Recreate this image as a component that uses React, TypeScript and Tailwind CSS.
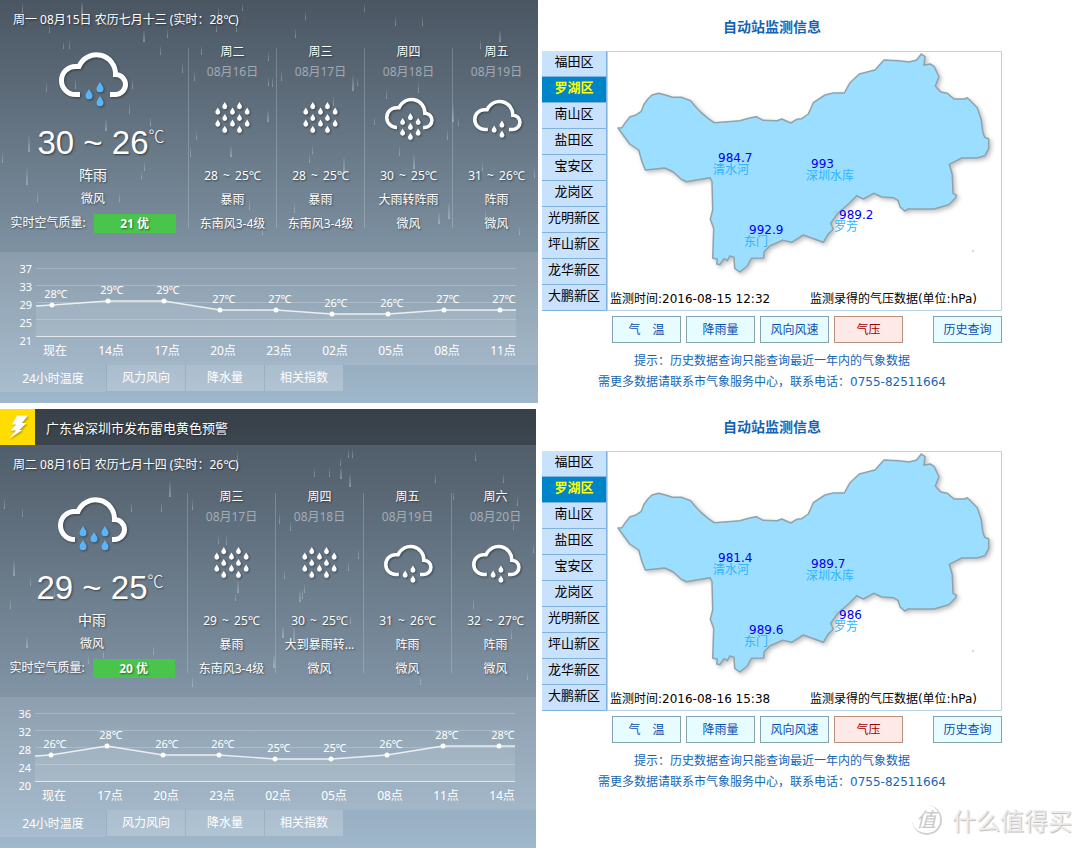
import clsx from 'clsx';

type IconKind = 'shower' | 'moderate' | 'heavy' | 'storm';

interface Forecast {
  week: string;
  date: string;
  icon: IconKind;
  low: number;
  high: number;
  condition: string;
  wind: string;
}

interface HourPoint {
  hour: string;
  temp: number;
  y: number;
}

interface WeatherData {
  alert?: string;
  title: string;
  icon: IconKind;
  high: number;
  low: number;
  condition: string;
  wind: string;
  aqi: string;
  forecasts: Forecast[];
  scale: number[];
  hours: HourPoint[];
  rain: number[][];
}

interface StationData {
  time: string;
  values: string[];
}

const WEATHER: WeatherData[] = [
  {
    title: '周一 08月15日 农历七月十三 (实时：28℃)',
    icon: 'shower',
    high: 30,
    low: 26,
    condition: '阵雨',
    wind: '微风',
    aqi: '21 优',
    forecasts: [
      { week: '周二', date: '08月16日', icon: 'storm', high: 28, low: 25, condition: '暴雨', wind: '东南风3-4级' },
      { week: '周三', date: '08月17日', icon: 'storm', high: 28, low: 25, condition: '暴雨', wind: '东南风3-4级' },
      { week: '周四', date: '08月18日', icon: 'heavy', high: 30, low: 25, condition: '大雨转阵雨', wind: '微风' },
      { week: '周五', date: '08月19日', icon: 'shower', high: 31, low: 26, condition: '阵雨', wind: '微风' },
    ],
    scale: [37, 33, 29, 25, 21],
    hours: [
      { hour: '现在', temp: 28, y: 54 },
      { hour: '14点', temp: 29, y: 50 },
      { hour: '17点', temp: 29, y: 50 },
      { hour: '20点', temp: 27, y: 59 },
      { hour: '23点', temp: 27, y: 59 },
      { hour: '02点', temp: 26, y: 63 },
      { hour: '05点', temp: 26, y: 63 },
      { hour: '08点', temp: 27, y: 59 },
      { hour: '11点', temp: 27, y: 59 },
    ],
    rain: [
      [22, 3, 10], [81, 2, 12], [49, 25, 8], [143, 31, 11], [167, 29, 9], [63, 42, 7], [69, 40, 9], [160, 46, 9],
      [201, 46, 9], [182, 64, 9], [46, 83, 9], [75, 79, 10], [132, 80, 9], [28, 136, 16], [129, 104, 10],
      [105, 120, 11], [150, 117, 9], [26, 169, 16], [2, 153, 10], [144, 162, 9], [141, 172, 7], [37, 192, 10],
      [119, 194, 8], [196, 132, 8], [190, 147, 10], [230, 146, 11], [218, 7, 8], [242, 4, 7], [216, 24, 8],
      [236, 24, 8], [305, 12, 8], [295, 29, 9], [268, 52, 9], [268, 77, 9], [272, 78, 9], [281, 71, 10],
      [333, 96, 10], [267, 111, 11], [312, 146, 8], [309, 154, 9], [343, 158, 16], [294, 203, 10], [249, 200, 10],
      [262, 230, 5], [194, 72, 9], [364, 4, 8], [395, 17, 9], [422, 17, 9], [499, 31, 11], [480, 40, 9],
      [352, 76, 15], [357, 78, 8], [418, 83, 10], [386, 90, 9], [452, 106, 16], [458, 118, 8], [374, 117, 8],
      [447, 130, 10], [399, 146, 10], [413, 155, 14], [482, 162, 9], [534, 168, 10], [448, 203, 16],
      [438, 213, 11], [485, 210, 10], [519, 227, 8],
    ],
  },
  {
    alert: '广东省深圳市发布雷电黄色预警',
    title: '周二 08月16日 农历七月十四 (实时：26℃)',
    icon: 'moderate',
    high: 29,
    low: 25,
    condition: '中雨',
    wind: '微风',
    aqi: '20 优',
    forecasts: [
      { week: '周三', date: '08月17日', icon: 'storm', high: 29, low: 25, condition: '暴雨', wind: '东南风3-4级' },
      { week: '周四', date: '08月18日', icon: 'storm', high: 30, low: 25, condition: '大到暴雨转...', wind: '微风' },
      { week: '周五', date: '08月19日', icon: 'shower', high: 31, low: 26, condition: '阵雨', wind: '微风' },
      { week: '周六', date: '08月20日', icon: 'shower', high: 32, low: 27, condition: '阵雨', wind: '微风' },
    ],
    scale: [36, 32, 28, 24, 20],
    hours: [
      { hour: '现在', temp: 26, y: 59 },
      { hour: '17点', temp: 28, y: 50 },
      { hour: '20点', temp: 26, y: 59 },
      { hour: '23点', temp: 26, y: 59 },
      { hour: '02点', temp: 25, y: 63 },
      { hour: '05点', temp: 25, y: 63 },
      { hour: '08点', temp: 26, y: 59 },
      { hour: '11点', temp: 28, y: 50 },
      { hour: '14点', temp: 28, y: 50 },
    ],
    rain: [
      [169, 73, 15], [4, 90, 10], [22, 99, 9], [131, 94, 9], [161, 94, 9], [192, 91, 10], [80, 44, 10],
      [237, 43, 8], [13, 152, 15], [30, 168, 9], [10, 190, 10], [26, 228, 11], [54, 180, 8], [153, 237, 9],
      [103, 240, 9], [88, 247, 8], [192, 268, 10], [237, 172, 12], [235, 185, 7], [218, 127, 8], [226, 126, 10],
      [348, 40, 9], [352, 40, 9], [340, 49, 8], [314, 59, 9], [329, 59, 9], [340, 59, 11], [349, 66, 12],
      [435, 65, 9], [503, 65, 9], [475, 43, 9], [453, 83, 8], [279, 105, 10], [290, 113, 9], [358, 140, 10],
      [348, 153, 9], [284, 161, 9], [304, 175, 9], [299, 182, 11], [302, 180, 10], [282, 218, 11], [273, 247, 12],
      [293, 218, 16], [473, 190, 10], [350, 206, 9], [511, 220, 10], [527, 264, 7], [420, 268, 8], [513, 112, 9],
      [533, 136, 8], [517, 88, 9],
    ],
  },
];

const STATIONS: StationData[] = [
  { time: '2016-08-15 12:32', values: ['984.7', '993', '989.2', '992.9'] },
  { time: '2016-08-16 15:38', values: ['981.4', '989.7', '986', '989.6'] },
];

const PINS = [
  { name: '清水河', x: 105, y: 110 },
  { name: '深圳水库', x: 198, y: 116 },
  { name: '罗芳', x: 226, y: 167 },
  { name: '东门', x: 136, y: 182 },
];

const DISTRICTS = ['福田区', '罗湖区', '南山区', '盐田区', '宝安区', '龙岗区', '光明新区', '坪山新区', '龙华新区', '大鹏新区'];
const TABS = ['24小时温度', '风力风向', '降水量', '相关指数'];
const METRICS = ['气　温', '降雨量', '风向风速', '气压'];

const DROPS: Record<IconKind, number[][]> = {
  shower: [[41, 32], [30, 39], [41, 46]],
  moderate: [[25, 31], [47, 31], [36, 37], [25, 45], [47, 45]],
  heavy: [[36, 24], [25, 31], [47, 31], [36, 38], [25, 46], [47, 46], [36, 52]],
  storm: [[14, 0], [35, 0], [4, 8], [25, 8], [46, 8], [14, 17], [35, 17], [4, 25], [25, 25], [46, 25], [14, 34], [35, 34]],
};

const VIEW_BOX: Record<IconKind, string> = {
  shower: '0 0 68 57',
  moderate: '0 0 68 57',
  heavy: '0 0 68 63',
  storm: '0 0 50 45',
};

const SHADOW = '[text-shadow:1px_1px_2px_rgba(0,0,0,0.5)]';

function WeatherIcon({ kind, big }: { kind: IconKind; big?: boolean }) {
  const open = kind === 'shower' ? 21 : 17;
  const close = kind === 'shower' ? 51 : 54;
  return (
    <svg
      viewBox={VIEW_BOX[kind]}
      aria-hidden="true"
      className={clsx(
        'overflow-visible drop-shadow-[1px_1px_1px_rgba(0,0,0,0.4)]',
        big ? 'w-[68px]' : kind === 'storm' ? 'w-[35px]' : 'w-12',
      )}
    >
      {kind !== 'storm' && (
        <path
          d={`M${open} 44.5H16.5A14 14 0 0 1 16.5 16.5H20A19 19 0 0 1 56.5 24.5A10 10 0 0 1 56.5 44.5H${close}`}
          fill="none"
          stroke="#fff"
          strokeWidth="5"
        />
      )}
      {DROPS[kind].map(([x, y]) => (
        <path
          key={`${x}-${y}`}
          transform={`translate(${x} ${y})`}
          d="M0 0C1.2 2.6 3.5 4.4 3.5 6.7A3.5 3.5 0 0 1 -3.5 6.7C-3.5 4.4 -1.2 2.6 0 0z"
          fill={big ? '#5ab4fb' : '#fff'}
        />
      ))}
    </svg>
  );
}

function Rain({ drops, id }: { drops: number[][]; id: string }) {
  return (
    <svg className="absolute inset-0 h-full w-full" aria-hidden="true">
      <defs>
        <linearGradient id={id} x1="0" y1="0" x2="0" y2="1">
          <stop offset="0" stopColor="#fff" stopOpacity="0.05" />
          <stop offset="1" stopColor="#fff" stopOpacity="0.3" />
        </linearGradient>
      </defs>
      {drops.map(([x, y, h], i) => (
        <rect key={i} x={x} y={y} width={h > 10 ? 2 : 1} height={h} fill={`url(#${id})`} />
      ))}
    </svg>
  );
}

function HourChart({ scale, hours }: { scale: number[]; hours: HourPoint[] }) {
  const points = hours.map((p, i) => `${52 + i * 56},${p.y}`).join(' ');
  const line = `36,${hours[0].y + 1} ${points} 516,${hours[8].y}`;
  return (
    <svg
      viewBox="0 0 538 114"
      preserveAspectRatio="xMidYMid slice"
      className="block min-h-[114px] w-full"
      fill="#fff"
      role="img"
      aria-label="24小时温度"
    >
      {scale.map((n, i) => (
        <g key={n}>
          <rect x="36" y={17 + i * 17} width="480" height="1" fillOpacity={i === 4 ? 0.7 : 0.22} />
          <text x="32" y={22 + i * 18} fontSize="11" textAnchor="end">
            {n}
          </text>
        </g>
      ))}
      <polygon points={`${line} 516,85 36,85`} fillOpacity="0.1" />
      <polyline points={line} fill="none" stroke="#fff" strokeOpacity="0.8" strokeWidth="1.3" />
      {hours.map((p, i) => (
        <g key={p.hour} textAnchor="middle">
          <circle cx={52 + i * 56} cy={p.y} r="2.5" />
          <text x={56 + i * 56} y={p.y - 7} fontSize="11">
            {p.temp}℃
          </text>
          <text x={55 + i * 56} y="104" fontSize="12">
            {p.hour}
          </text>
        </g>
      ))}
    </svg>
  );
}

function AlertBar({ text }: { text: string }) {
  return (
    <div className="relative flex h-9 items-center bg-black/25 text-[13px]">
      <span className="flex h-9 w-[35px] items-center justify-center bg-[#ffdd00]">
        <svg viewBox="0 0 20 25" className="w-5 drop-shadow-[1px_1px_1px_rgba(0,0,0,0.35)]" aria-hidden="true">
          <path d="M9 0.5H20L14 8H18.5L11.5 15H14.5L0.5 24L8 15.5H2.5L8 9.5H4z" fill="#fff" />
        </svg>
      </span>
      <p className={clsx('pt-1 pl-[11px]', SHADOW)}>{text}</p>
    </div>
  );
}

function ForecastColumn({ day }: { day: Forecast }) {
  return (
    <>
      <div className="my-2 w-px shrink-0 bg-white/20" />
      <div className="shrink-0 grow basis-[87px] pt-0.5 text-center leading-6 whitespace-nowrap">
        <p className="leading-5">{day.week}</p>
        <p className="leading-5 text-white/45 [text-shadow:none]">{day.date}</p>
        <div className="mb-2.5 flex h-[72px] items-center justify-center">
          <WeatherIcon kind={day.icon} />
        </div>
        <p>
          {day.high} <span className="mx-0.5">~</span> {day.low}℃
        </p>
        <p>{day.condition}</p>
        <p>{day.wind}</p>
      </div>
    </>
  );
}

function WeatherPanel({ data, id }: { data: WeatherData; id: string }) {
  return (
    <section className="relative overflow-hidden bg-linear-to-b from-[#4a5662] to-[#a0b8cc] font-['Noto_Sans','Noto_Sans_CJK_SC',sans-serif] text-xs text-white">
      <Rain drops={data.rain} id={id} />
      {data.alert && <AlertBar text={data.alert} />}
      <div className={clsx('relative', SHADOW)}>
        <h2 className="flex h-10 items-center px-[13px]">{data.title}</h2>
        <div className="flex justify-center pb-[15px]">
          <div className="flex shrink-0 grow basis-[190px] flex-col items-center pt-2.5 leading-6 whitespace-nowrap">
            <div className="h-[73px]">
              <WeatherIcon kind={data.icon} big />
            </div>
            <p className="relative font-['Liberation_Sans',Arial,sans-serif] text-[33px] leading-10">
              {data.high} ~ {data.low}
              <span className="absolute top-0 left-full font-['Noto_Sans_CJK_SC',sans-serif] text-base leading-6 font-light">
                ℃
              </span>
            </p>
            <p className="text-sm leading-6">{data.condition}</p>
            <p>{data.wind}</p>
            <p className="flex items-center gap-2">
              实时空气质量:
              <strong className="h-[19px] w-[82px] bg-[#4ac54c] text-center leading-[19px]">{data.aqi}</strong>
            </p>
          </div>
          {data.forecasts.map((day) => (
            <ForecastColumn key={day.week} day={day} />
          ))}
        </div>
      </div>
      <div className="relative bg-white/10 shadow-[inset_0_1px_0_rgba(0,0,0,0.08)]">
        <HourChart scale={data.scale} hours={data.hours} />
      </div>
      <div className="relative flex h-[38px] items-start gap-px">
        {TABS.map((tab, i) => (
          <button
            key={tab}
            type="button"
            className={clsx('text-center', i === 0 ? 'h-[27px] w-[106px] bg-white/10' : 'h-[26px] w-[78px] bg-white/20')}
          >
            {tab}
          </button>
        ))}
      </div>
    </section>
  );
}

function StationMap({ values }: { values: string[] }) {
  return (
    <svg viewBox="0 0 393 235" className="block w-full" role="img" aria-label="罗湖区">
      <path
        className="drop-shadow-[2px_2px_2px_rgba(0,0,0,0.25)]"
        d="M10 76L14 75.7L17.3 70.7L22 64.7L27.3 63.3L33.3 59.3L36 52.3L40 46.7L44 43L50.7 41.3L58.3 43.3L64.3 45.3H73.3L82.7 48.7L86.7 53.7L93.3 60.7L100 66.3L106 70.7L116.7 70L131.7 68.7L141.7 66L148.3 64.7L155 68.3L169.3 68.7L173.7 67L182.7 71L188.7 67.3L193.7 66.7L200.3 62L205.3 50.7L217 43L225.3 41H236.3L242 30.7L251.3 22L267 18L276 8L290.3 8.7L301.3 10L308.7 8L313.3 2L317 4.7L316 13.3L322 12L326.3 14.7L331 24.7L327.3 34L332.7 40L339.3 41.3L346 47H357L359.3 45.7L369.3 55.7L373.3 68L374.7 79.7L376.7 85.3L380.7 87V96.3L377 103.7L368.7 106H353.7L341.3 112.3L344.3 123L345 141.3L348.7 143.3L347.3 146.3L340.7 152.7L326 157H300.3L296.7 159L292 154.7L290.3 148.7L285.3 145.7L273.7 145L265.7 141.3L255.3 147L248.7 143.7L241.3 151.3L230.3 160.7L222.7 171.3L225.3 177.3L220.3 182L215.3 190.3L195.3 183L183.7 190.3L174.7 188.3L162 193.7L156 199.7L155.7 206L143.3 206.3L139.3 214L131.7 220L126.7 216.3L126 205.3L121.7 204L119.3 208.7L116 206.7L111.7 212.7L108.7 212L109.3 207.3L104.7 206L105.7 176.3L102.3 167.3L104.7 158L104 129.7L102 125.7L78.3 129.7L73.3 127.3L65 119.7L56.7 116L37.3 118L34 109.7L30.7 98L21.7 92z"
        fill="#9bdeff"
        stroke="#8fa3ac"
        strokeWidth="1.5"
        strokeLinejoin="round"
      />
      <circle cx="365" cy="199" r="1" fill="#ccc" />
      {PINS.map((pin, i) => (
        <g key={pin.name} fontSize="12">
          <text x={pin.x + 5} y={pin.y} fill="#0000f0">
            {values[i]}
          </text>
          <text x={pin.x} y={pin.y + 12} fill="#2fb4ff">
            {pin.name}
          </text>
        </g>
      ))}
    </svg>
  );
}

function MetricButton({ label, active }: { label: string; active?: boolean }) {
  return (
    <button
      type="button"
      className={clsx(
        'h-[27px] w-[69px] border',
        active ? 'border-[#b98f7d] bg-[#fde9e7] text-[#a00000]' : 'border-[#86a3b0] bg-[#e6fcfe] text-[#0a4fae]',
      )}
    >
      {label}
    </button>
  );
}

function StationPanel({ data }: { data: StationData }) {
  return (
    <section className="max-w-[460px] pt-[15px] pb-[7px] font-['DejaVu_Sans','Noto_Sans_CJK_SC',sans-serif] text-xs text-black">
      <h2 className="mb-3 text-center text-sm leading-6 font-bold text-[#1464b4]">自动站监测信息</h2>
      <div className="flex">
        <ul className="w-[65px] border-r border-[#7fb2dc] text-[13px]">
          {DISTRICTS.map((name, i) => (
            <li key={name} className="border-b border-[#7fb2dc]">
              <button
                type="button"
                className={clsx(
                  'block h-[25px] w-full pb-1 leading-[21px] whitespace-nowrap',
                  i === 1 ? 'bg-[#0086c8] font-bold text-[#ffff00]' : 'bg-[#c8e1fd]',
                )}
              >
                {name}
              </button>
            </li>
          ))}
        </ul>
        <div className="flex flex-1 flex-col justify-between border border-[#b9d3e8]">
          <StationMap values={data.values} />
          <div className="flex justify-between pr-6 pl-0.5 leading-[22px] whitespace-nowrap">
            <p>监测时间:{data.time}</p>
            <p>监测录得的气压数据(单位:hPa)</p>
          </div>
        </div>
      </div>
      <div className="mt-[5px] flex gap-[5px] pl-[70px]">
        {METRICS.map((m) => (
          <MetricButton key={m} label={m} active={m === '气压'} />
        ))}
        <div className="ml-auto">
          <MetricButton label="历史查询" />
        </div>
      </div>
      <div className="mt-2 text-center leading-[21px] whitespace-nowrap text-[#1466b4]">
        <p>提示：历史数据查询只能查询最近一年内的气象数据</p>
        <p>需更多数据请联系市气象服务中心，联系电话：0755-82511664</p>
      </div>
    </section>
  );
}

function Watermark() {
  return (
    <div className="mt-1 mr-2 flex items-center gap-2.5 self-end font-['Noto_Sans_CJK_SC',sans-serif] text-2xl leading-8 text-[#ececec] [text-shadow:1px_1px_1px_#bbb]">
      <span className="flex size-[30px] items-center justify-center rounded-full border-r-2 border-b-2 border-[#d0d0d0] text-xl text-[#c8c8c8] italic [text-shadow:none]">
        值
      </span>
      <span>什么值得买</span>
    </div>
  );
}

function App() {
  return (
    <main className="grid grid-cols-2 bg-white">
      <div className="flex flex-col gap-1.5">
        <div className="pr-0.5">
          <WeatherPanel data={WEATHER[0]} id="rain-a" />
        </div>
        <div className="pr-1">
          <WeatherPanel data={WEATHER[1]} id="rain-b" />
        </div>
      </div>
      <div className="flex flex-col pl-0.5">
        <StationPanel data={STATIONS[0]} />
        <StationPanel data={STATIONS[1]} />
        <Watermark />
      </div>
    </main>
  );
}

export default App;
